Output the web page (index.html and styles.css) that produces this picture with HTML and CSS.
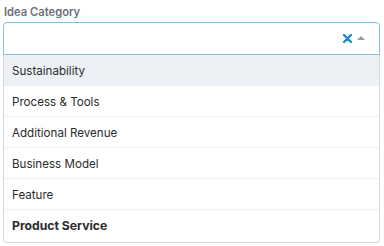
FILE: index.html
```html
<!DOCTYPE html>
<html lang="en">
<head>
  <meta charset="UTF-8" />
  <title>Idea Category</title>
  <link rel="stylesheet" href="styles.css">
</head>
<body>
  <div class="field">
    <label class="field-label">Idea Category</label>
    <div class="select">
      <div class="select-control">
        <div class="select-value"></div>
        <span class="select-clear">
          <svg width="9" height="9" viewBox="0 0 9 9"><path d="M1 1 L8 8 M8 1 L1 8" stroke="#1b82c8" stroke-width="2.2" stroke-linecap="round"/></svg>
        </span>
        <span class="select-arrow"></span>
      </div>
      <ul class="select-menu">
        <li class="option focused">Sustainability</li>
        <li class="option">Process &amp; Tools</li>
        <li class="option">Additional Revenue</li>
        <li class="option">Business Model</li>
        <li class="option">Feature</li>
        <li class="option selected">Product Service</li>
      </ul>
    </div>
  </div>
</body>
</html>
```

FILE: styles.css
```css
* {
  margin: 0;
  padding: 0;
  box-sizing: border-box;
}

body {
  font-family: Inter, 'Noto Sans', sans-serif;
  background: #fff;
  color: #2b2b2b;
  padding: 4px 4px 0 3px;
}

.field-label {
  display: block;
  font-size: 11.2px;
  font-weight: 600;
  color: #6b7079;
  line-height: 15px;
  margin-bottom: 2px;
  padding-left: 1px;
  padding-top: 1px;
}

.select-control {
  display: flex;
  align-items: center;
  height: 33px;
  border: 1px solid #7cc0e4;
  border-radius: 4px 4px 0 0;
  padding: 0 14px 0 10px;
}

.select-value {
  flex: 1;
}

.select-clear {
  display: flex;
  margin-right: 5px;
}

.select-arrow {
  width: 0;
  height: 0;
  border-left: 4px solid transparent;
  border-right: 4px solid transparent;
  border-bottom: 4px solid #999;
  margin-top: -2px;
}

.select-menu {
  list-style: none;
  border: 1px solid #d3d7dd;
  border-top: none;
  border-radius: 0 0 4px 4px;
}

.option {
  height: 31px;
  line-height: 30px;
  padding: 1px 0 0 8px;
  font-size: 11.6px;
  color: #2b2b2b;
  border-bottom: 1px solid #eeeff1;
}

.option:last-child {
  border-bottom: none;
  height: 32px;
}

.option.focused {
  background: #edf0f4;
}

.option.selected {
  font-size: 12.2px;
  font-weight: 700;
}
```
